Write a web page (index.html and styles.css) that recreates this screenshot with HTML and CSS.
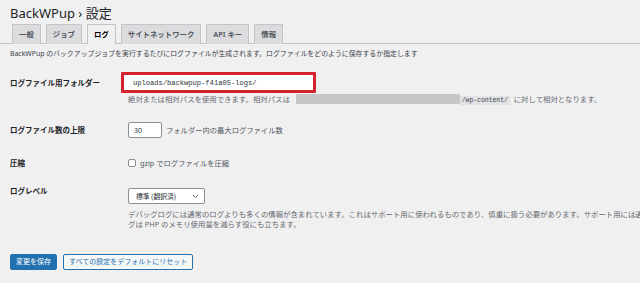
FILE: index.html
```html
<!DOCTYPE html>
<html>
<head>
  <title>BackWPup › 設定</title>
  <link rel="stylesheet" href="styles.css">
</head>
<body>

  <h1 class="title">BackWPup › 設定</h1>

  <nav class="tabs">
    <a class="tab">一般</a>
    <a class="tab">ジョブ</a>
    <a class="tab active">ログ</a>
    <a class="tab">サイトネットワーク</a>
    <a class="tab">API キー</a>
    <a class="tab">情報</a>
  </nav>

  <div class="wrap">
    <p class="intro">BackWPup のバックアップジョブを実行するたびにログファイルが生成されます。ログファイルをどのように保存するか指定します</p>

    <div class="row row-folder">
      <label class="label">ログファイル用フォルダー</label>
      <div class="field">
        <input type="text" class="text-input marked" value="uploads/backwpup-f41a05-logs/">
        <p class="desc">絶対または相対パスを使用できます。相対パスは <span class="redacted"></span><code>/wp-content/</code> に対して相対となります。</p>
      </div>
    </div>

    <div class="row row-max">
      <label class="label">ログファイル数の上限</label>
      <div class="field inline">
        <input type="text" class="small-input" value="30">
        <span class="after">フォルダー内の最大ログファイル数</span>
      </div>
    </div>

    <div class="row row-gzip">
      <label class="label">圧縮</label>
      <div class="field inline">
        <span class="checkbox"></span>
        <span class="after">gzip でログファイルを圧縮</span>
      </div>
    </div>

    <div class="row row-level">
      <label class="label">ログレベル</label>
      <div class="field">
        <div class="select">
          <span>標準 (翻訳済)</span>
          <svg width="7" height="5" viewBox="0 0 7 5"><path d="M1 1 L3.5 3.5 L6 1" fill="none" stroke="#50575e" stroke-width="1"/></svg>
        </div>
        <p class="desc long">デバッグログには通常のログよりも多くの情報が含まれています。これはサポート用に使われるものであり、慎重に扱う必要があります。サポート用には通常のログより詳細なデバッグロ<br>グは PHP のメモリ使用量を減らす役にも立ちます。</p>
      </div>
    </div>

    <div class="buttons">
      <button class="btn primary">変更を保存</button>
      <button class="btn secondary">すべての設定をデフォルトにリセット</button>
    </div>
  </div>

</body>
</html>
```

FILE: styles.css
```css
body {
  margin: 0;
  width: 640px;
  height: 283px;
  overflow: hidden;
  background: #f0f0f1;
  color: #1d2327;
  font-family: "Noto Sans", "Noto Sans CJK JP", sans-serif;
}
.title {
  margin: 5px 0 0 10px;
  font-size: 13px;
  line-height: 16px;
  font-weight: 400;
}
.tabs {
  display: flex;
  gap: 5px;
  margin-top: 3px;
  padding-left: 12px;
  border-bottom: 1px solid #c3c4c7;
  height: 19px;
}
.tab {
  box-sizing: border-box;
  height: 20px;
  padding: 0 6px;
  font-size: 7.4px;
  line-height: 18px;
  font-weight: 600;
  color: #50575e;
  background: #dcdcde;
  border: 1px solid #c3c4c7;
  border-bottom: none;
}
.tab.active {
  background: #f0f0f1;
  color: #000;
}
.wrap {
  padding-left: 10px;
}
.intro {
  margin: 5px 0 0;
  font-size: 6.9px;
  line-height: 10px;
  color: #3c434a;
  white-space: nowrap;
}
.row {
  display: grid;
  grid-template-columns: 118px 1fr;
}
.label {
  font-size: 7.5px;
  line-height: 10px;
  font-weight: 600;
}
.field.inline {
  display: flex;
  align-items: center;
}
.desc {
  margin: 0;
  font-size: 7.4px;
  line-height: 10px;
  color: #646970;
  white-space: nowrap;
}
.redacted {
  display: inline-block;
  width: 164px;
  height: 10px;
  margin-left: 4px;
  vertical-align: -2px;
  background: #c6c6c7;
}
code {
  font-family: "Liberation Mono", monospace;
  font-size: 6.4px;
  padding: 1px 2px;
  background: #e2e2e4;
  color: #3c434a;
  margin-right: 2px;
}
.row-folder {
  margin-top: 13px;
}
.row-folder .label {
  padding-top: 6px;
}
.text-input {
  display: block;
  box-sizing: border-box;
  width: 195px;
  height: 21px;
  margin: 0 0 1px -7px;
  padding: 0 0 0 9px;
  font-family: "Liberation Mono", monospace;
  font-size: 7.1px;
  color: #2c3338;
  background: #fff;
  outline: none;
}
.marked {
  border: 3px solid #d42230;
  border-radius: 1px;
}
.row-max {
  margin-top: 16px;
}
.row-max .label {
  padding-top: 3px;
}
.small-input {
  box-sizing: border-box;
  width: 34px;
  height: 16px;
  padding: 0 5px;
  border: 1px solid #8c8f94;
  border-radius: 2px;
  font-family: "Noto Sans", sans-serif;
  font-size: 7px;
  color: #2c3338;
  background: #fff;
}
.after {
  margin-left: 4px;
  font-size: 7.3px;
  line-height: 10px;
  color: #50575e;
}
.row-gzip {
  margin-top: 20px;
}
.row-gzip .label,
.row-gzip .field {
  height: 10px;
}
.checkbox {
  box-sizing: border-box;
  width: 8px;
  height: 8px;
  border: 1px solid #8c8f94;
  border-radius: 2px;
  background: #fff;
}
.row-level {
  margin-top: 20px;
}
.row-level .label {
  margin-top: -2px;
}
.select {
  box-sizing: border-box;
  width: 77px;
  height: 16px;
  display: flex;
  align-items: center;
  justify-content: space-between;
  padding: 0 5px 0 7px;
  border: 1px solid #8c8f94;
  border-radius: 2px;
  background: #fff;
  font-size: 6.8px;
  color: #2c3338;
}
.desc.long {
  margin-top: 5px;
}
.buttons {
  display: flex;
  gap: 6px;
  margin-top: 25px;
}
.btn {
  box-sizing: border-box;
  height: 16px;
  padding: 0 5px;
  border-radius: 2px;
  white-space: nowrap;
  font-family: "Noto Sans", "Noto Sans CJK JP", sans-serif;
  font-size: 7px;
  line-height: 14px;
}
.primary {
  background: #2271b1;
  border: 1px solid #2271b1;
  color: #fff;
}
.secondary {
  background: #f6f7f7;
  border: 1px solid #2271b1;
  color: #2271b1;
}
```
